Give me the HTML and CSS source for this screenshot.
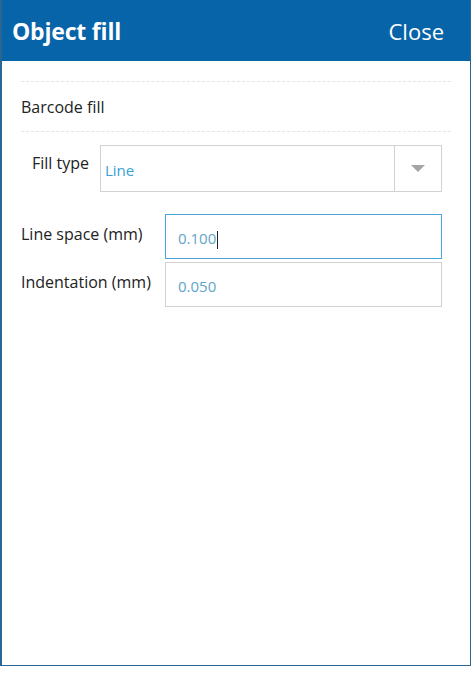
FILE: index.html
```html
<!DOCTYPE html>
<html lang="en">
<head>
  <meta charset="UTF-8" />
  <meta name="viewport" content="width=device-width, initial-scale=1" />
  <title>Object fill</title>
  <link rel="stylesheet" href="styles.css">
</head>
<body>

<div class="dialog">
  <header>
    <h1>Object fill</h1>
    <a href="#" class="close">Close</a>
  </header>

  <div class="content">
    <div class="section">Barcode fill</div>

    <div class="row fill-row">
      <label>Fill type</label>
      <div class="select">
        <span class="value">Line</span>
        <span class="arrow"></span>
      </div>
    </div>

    <div class="row field">
      <label>Line space (mm)</label>
      <div class="input focused">0.100<span class="caret"></span></div>
    </div>
    <div class="row field">
      <label>Indentation (mm)</label>
      <div class="input">0.050</div>
    </div>
  </div>
</div>

</body>
</html>
```

FILE: styles.css
```css
body {
  margin: 0;
  padding: 0;
  background: #fff;
  font-family: "Open Sans", "Noto Sans", sans-serif;
  color: #222;
  overflow: hidden;
}
.dialog {
  width: 468px;
  height: 665px;
  border: 1px solid #2a6593;
  border-top: none;
  border-left-width: 2px;
  background: #fff;
  display: flex;
  flex-direction: column;
}
header {
  background: #0864a8;
  color: white;
  height: 61px;
  display: flex;
  justify-content: space-between;
  align-items: center;
  padding: 0 26px 0 10px;
}
header h1 {
  margin: 0;
  font-size: 23px;
  font-weight: bold;
  letter-spacing: -0.2px;
}
.close {
  color: white;
  text-decoration: none;
  font-size: 22px;
}
.content {
  padding: 20px 19px 0 19px;
}
.section {
  border-top: 1px dashed #e4e4e4;
  border-bottom: 1px dashed #e4e4e4;
  height: 49px;
  line-height: 50px;
  font-size: 16px;
}
.row {
  display: flex;
}
.row label {
  font-size: 16px;
}
.fill-row {
  margin-top: 13px;
  padding-left: 11px;
  margin-right: 9px;
}
.fill-row label {
  width: 68px;
  padding-top: 7px;
}
.select {
  flex: 1;
  height: 45px;
  border: 1px solid #d2d2d2;
  display: flex;
  align-items: center;
}
.select .value {
  flex: 1;
  color: #3a9fd6;
  font-size: 15px;
  padding-left: 4px;
  padding-top: 3px;
}
.select .arrow {
  width: 46px;
  height: 45px;
  border-left: 1px solid #d2d2d2;
  display: flex;
  justify-content: center;
  align-items: center;
}
.select .arrow::after {
  content: "";
  border-left: 7px solid transparent;
  border-right: 7px solid transparent;
  border-top: 7px solid #a5a5a5;
}
.field {
  margin-right: 9px;
}
.field label {
  width: 144px;
  padding-top: 9px;
}
.fill-row + .field {
  margin-top: 22px;
}
.field + .field {
  margin-top: 3px;
}
.input {
  flex: 1;
  height: 43px;
  border: 1px solid #d2d2d2;
  padding-left: 12px;
  line-height: 46px;
  font-size: 15px;
  color: #5ea4cd;
}
.input.focused {
  border-color: #4aa4d8;
}
.caret {
  display: inline-block;
  width: 1px;
  height: 18px;
  background: #222;
  vertical-align: middle;
  margin-left: 1px;
}
```
